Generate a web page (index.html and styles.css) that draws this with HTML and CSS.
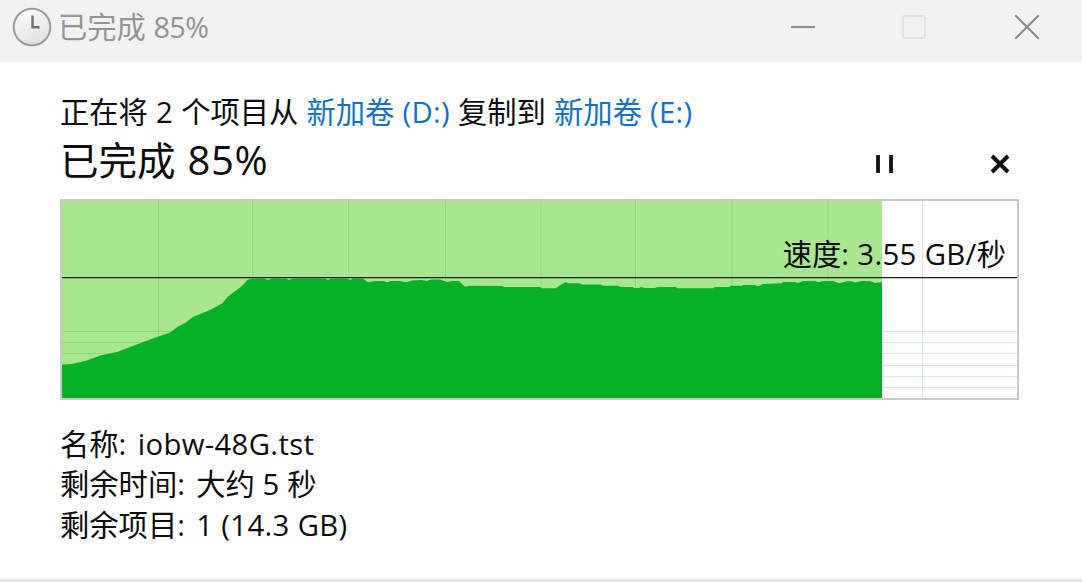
FILE: index.html
```html
<!DOCTYPE html>
<html lang="zh-CN">
<head>
    <meta charset="UTF-8">
    <title>已完成 85%</title>
    <link rel="stylesheet" href="styles.css">
</head>
<body>
    <div class="titlebar">
        <svg class="clock" width="40" height="40" viewBox="0 0 40 40">
            <defs>
                <linearGradient id="face" x1="0" y1="0" x2="0.4" y2="1">
                    <stop offset="0" stop-color="#ffffff"/>
                    <stop offset="1" stop-color="#e2e2e2"/>
                </linearGradient>
            </defs>
            <circle cx="20" cy="20" r="18.3" fill="url(#face)" stroke="#9b9b9b" stroke-width="2"/>
            <path d="M20.5 8.5V20.3H27.5" fill="none" stroke="#707070" stroke-width="2.4"/>
        </svg>
        <div class="title">已完成 <span class="latin">85%</span></div>
        <div class="window-buttons">
            <svg width="26" height="26" viewBox="0 0 26 26"><path d="M1 13H25" stroke="#909090" stroke-width="2.2"/></svg>
            <svg width="26" height="26" viewBox="0 0 26 26"><rect x="1" y="2" width="22" height="22" rx="1.5" fill="none" stroke="#e0e0e0" stroke-width="1.8"/></svg>
            <svg width="26" height="26" viewBox="0 0 26 26"><path d="M1.2 1.2L24.8 24.8M24.8 1.2L1.2 24.8" stroke="#8c8c8c" stroke-width="2.2"/></svg>
        </div>
    </div>

    <div class="content">
        <p class="source">正在将 <span class="latin">2</span> 个项目从 <a>新加卷 <span class="latin">(D:)</span></a> 复制到 <a>新加卷 <span class="latin">(E:)</span></a></p>

        <div class="status">
            <h1>已完成 <span class="latin">85%</span></h1>
            <div class="actions">
                <svg width="24" height="24" viewBox="0 0 24 24"><path d="M5 3V21M18 3V21" stroke="#111" stroke-width="3.8"/></svg>
                <svg width="24" height="24" viewBox="0 0 24 24"><path d="M4 4L20 20M20 4L4 20" stroke="#111" stroke-width="4"/></svg>
            </div>
        </div>

        <div class="chart">
            <svg width="955" height="197" viewBox="0 0 955 197">
                <rect width="820" height="197" fill="#a8e690"/>
                <g class="grid">
                    <path d="M96.5 0V197M190.5 0V197M286.5 0V197M383.5 0V197M479 0V197M573.5 0V197M670 0V197M766 0V197M860.5 0V197"/>
                    <path d="M0 130.5H955M0 141.5H955M0 152.5H955M0 164.5H955M0 175.5H955M0 186.5H955"/>
                </g>
                <path fill="#07b127" d="M0 197V163.5L10 163L25 159.5L38 154.5L55 151L88 138.5L108 131.5L116 125.5L123 122L131 116L138 113L148 109L160 102.5L166 95.5L178 86.5L183 82L185 79L190 77.5H202L206 79L210 77.5H224L227 79L230 77.5H263L266 79L269 77.5H285L288 79L291 77.5H301L306 81.3L313 80H321L325 81.3L329 80H338L344 81.3L350 79.5L360 79L364 80L370 78.5H378L385 81L390 80H397L403 85.7L408 84.7L440 85L442 86H478L480 87.3H494L498 84.3L504 81L506 82.3H518L520 83.5H539L541 84.7H556L558 86H571L572 87H577L579 86L583 87H593L595 86H614L615 87.3H651L653 86H667L669 84.7H680L681 84H693L696 85.3L701 83L720 82.3L721 81H733L736 82L741 80H753L756 81.3L761 80H771L776 82H778L785 80.3H790L793 81.5L800 80H808L813 82L820 81V197Z"/>
                <path d="M0 76.6H955" stroke="#1c221c" stroke-width="1.2"/>
            </svg>
            <div class="speed">速度<span class="latin">: 3.55 GB/</span>秒</div>
        </div>

        <div class="details">
            <div>名称<span class="latin colon">:</span><span class="latin">iobw-48G.tst</span></div>
            <div>剩余时间<span class="latin colon">:</span>大约 <span class="latin">5</span> 秒</div>
            <div>剩余项目<span class="latin colon">:</span><span class="latin">1 (14.3 GB)</span></div>
        </div>
    </div>
</body>
</html>
```
FILE: styles.css
```css
* {
    box-sizing: border-box;
}

body {
    margin: 0;
    height: 582px;
    display: flex;
    flex-direction: column;
    background: #fefefe;
    color: #0c0c0c;
    font-family: "Open Sans", "Noto Sans CJK SC", sans-serif;
    font-size: 29.3px;
    border-bottom: 3px solid #e4e4e4;
    overflow: hidden;
    white-space: nowrap;
}

.latin {
    letter-spacing: 0.012em;
}

.titlebar {
    height: 62px;
    padding: 0 42px 8px 12px;
    display: flex;
    align-items: center;
    background: #f2f2f2;
    color: #949494;
}

.title {
    margin-left: 6px;
    line-height: 54px;
}

.title .latin {
    font-size: 0.98em;
    letter-spacing: -0.02em;
}

.window-buttons {
    margin-left: auto;
    display: flex;
    gap: 86px;
}

.content {
    padding: 31px 63px 0 60px;
}

.source {
    margin: 0;
    line-height: 39px;
    word-spacing: 0.5px;
}

.source .latin {
    letter-spacing: 0.01em;
}

.source a {
    color: #1272c6;
}

.status {
    height: 67px;
    display: flex;
    justify-content: space-between;
}

h1 {
    margin: 0;
    font-size: 38.5px;
    font-weight: normal;
    line-height: 56px;
    word-spacing: 2px;
}

h1 .latin {
    font-size: 1.04em;
    letter-spacing: 0.015em;
}

.actions {
    display: flex;
    gap: 91px;
    padding: 20px 7px 0 0;
}

.chart {
    position: relative;
    height: 201px;
    border: 2px solid #c8cac8;
}

.chart svg {
    display: block;
}

.grid path {
    fill: none;
    stroke: #208040;
    stroke-opacity: 0.16;
}

.speed {
    position: absolute;
    top: 33px;
    right: 11px;
    line-height: 40px;
}

.details {
    margin-top: 24px;
    line-height: 40.3px;
}

.colon {
    margin-right: 11px;
}
```
